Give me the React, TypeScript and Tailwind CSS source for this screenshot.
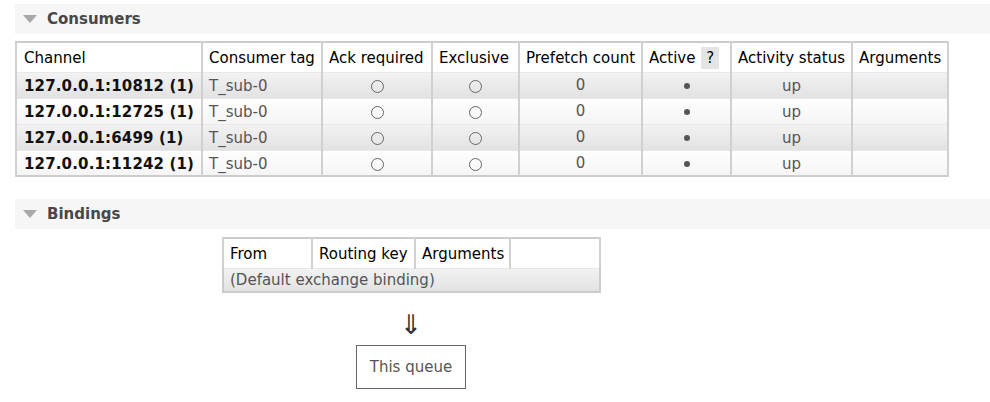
import React from "react";

const font = { fontFamily: '"DejaVu Sans", Verdana, sans-serif' };

function SectionHeader({ title }: { title: string }) {
  return (
    <div className="flex items-center h-[30px] bg-[#f6f6f6] ml-[15px] pl-[8px]">
      <svg width="14" height="8" viewBox="0 0 14 8" className="mr-[10px]">
        <polygon points="0,0 14,0 7,8" fill="#a8a8a8" />
      </svg>
      <span className="text-[15px] font-bold text-[#484848]">{title}</span>
    </div>
  );
}

const rows = [
  "127.0.0.1:10812 (1)",
  "127.0.0.1:12725 (1)",
  "127.0.0.1:6499 (1)",
  "127.0.0.1:11242 (1)",
];

const widths = [186, 120, 110, 87, 123, 89, 121, 96];

function Circle() {
  return <span className="inline-block w-[13px] h-[13px] rounded-full border border-[#666] align-middle" />;
}
function Dot() {
  return <span className="inline-block w-[6px] h-[6px] rounded-full bg-[#555] align-middle" />;
}

export default function App() {
  const odd = "bg-[linear-gradient(#f2f2f2,#e2e2e2)]";
  const even = "bg-[linear-gradient(#fefefe,#f5f5f5)]";
  return (
    <div className="w-[990px] h-[402px] bg-white pt-[4px]" style={font}>
      <SectionHeader title="Consumers" />
      <div className="ml-[15px] mt-[7px]">
        <table className="border-collapse border-2 border-[#cccccc] text-[15px] table-fixed" style={{ width: 932 }}>
          <colgroup>
            {widths.map((w, i) => (
              <col key={i} style={{ width: w }} />
            ))}
          </colgroup>
          <thead>
            <tr className="h-[30px] bg-white text-black">
              <th className="font-normal text-left px-[7px] pt-[1px] border-x-2 border-[#d0d0d0]">Channel</th>
              <th className="font-normal text-left px-[6px] pt-[1px] border-x-2 border-[#d0d0d0]">Consumer tag</th>
              <th className="font-normal text-left px-[6px] pt-[1px] border-x-2 border-[#d0d0d0] whitespace-nowrap">Ack required</th>
              <th className="font-normal text-left px-[6px] pt-[1px] border-x-2 border-[#d0d0d0]">Exclusive</th>
              <th className="font-normal text-left px-[6px] pt-[1px] border-x-2 border-[#d0d0d0] whitespace-nowrap">Prefetch count</th>
              <th className="font-normal text-left px-[6px] pt-[1px] border-x-2 border-[#d0d0d0] whitespace-nowrap">
                Active <span className="inline-block bg-[#e4e4e4] px-[5px] ml-[1px]">?</span>
              </th>
              <th className="font-normal text-left px-[6px] pt-[1px] border-x-2 border-[#d0d0d0] whitespace-nowrap">Activity status</th>
              <th className="font-normal text-left px-[6px] pt-[1px] border-x-2 border-[#d0d0d0]">Arguments</th>
            </tr>
          </thead>
          <tbody>
            {rows.map((r, i) => (
              <tr key={r} className={`h-[26px] border-t border-[#e8e8e8] ${i % 2 === 0 ? odd : even}`}>
                <td className="px-[7px] pt-[2px] font-bold text-[#111] border-x-2 border-[#d0d0d0] whitespace-nowrap tracking-[0.15px]">{r}</td>
                <td className="px-[6px] pt-[2px] text-[#555] border-x-2 border-[#d0d0d0]">T_sub-0</td>
                <td className="text-center pt-[2px] border-x-2 border-[#d0d0d0]"><Circle /></td>
                <td className="text-center pt-[2px] border-x-2 border-[#d0d0d0]"><Circle /></td>
                <td className="text-center pt-[1px] text-[#555] border-x-2 border-[#d0d0d0]">0</td>
                <td className="text-center pt-[2px] border-x-2 border-[#d0d0d0]"><Dot /></td>
                <td className="text-center pt-[2px] text-[#555] border-x-2 border-[#d0d0d0]">up</td>
                <td className="border-x-2 border-[#d0d0d0]"></td>
              </tr>
            ))}
          </tbody>
        </table>
      </div>
      <div className="mt-[22px]">
        <SectionHeader title="Bindings" />
      </div>
      <div className="ml-[222px] mt-[8px]">
        <table className="border-collapse border-2 border-[#cccccc] text-[15px] table-fixed" style={{ width: 377 }}>
          <colgroup>
            <col style={{ width: 89 }} />
            <col style={{ width: 103 }} />
            <col style={{ width: 95 }} />
            <col style={{ width: 90 }} />
          </colgroup>
          <thead>
            <tr className="h-[30px] bg-white text-black">
              <th className="font-normal text-left px-[6px] pt-[1px] border-x-2 border-[#d0d0d0]">From</th>
              <th className="font-normal text-left px-[6px] pt-[1px] border-x-2 border-[#d0d0d0] whitespace-nowrap">Routing key</th>
              <th className="font-normal text-left px-[6px] pt-[1px] border-x-2 border-[#d0d0d0]">Arguments</th>
              <th className="border-x-2 border-[#d0d0d0]"></th>
            </tr>
          </thead>
          <tbody>
            <tr className={`h-[24px] border-t border-[#e8e8e8] ${odd}`}>
              <td colSpan={4} className="px-[6px] text-[#555] whitespace-nowrap">(Default exchange binding)</td>
            </tr>
          </tbody>
        </table>
      </div>
      <div className="w-[822px] flex flex-col items-center mt-[19px]">
        <div className="text-[27px] leading-[26px] text-[#333]">⇓</div>
        <div className="mt-[7px] w-[110px] h-[44px] border border-[#666] flex items-center justify-center text-[15px] text-[#555]">
          This queue
        </div>
      </div>
    </div>
  );
}
